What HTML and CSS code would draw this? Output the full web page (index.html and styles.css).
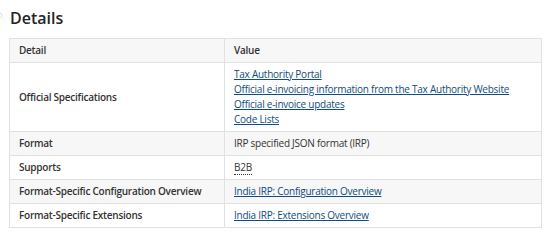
FILE: index.html
```html
<!DOCTYPE html>
<html lang="en">
<head>
    <meta charset="UTF-8">
    <title>Details</title>
    <link rel="stylesheet" href="styles.css">
</head>
<body>
    <div class="secao">
        <h2 class="titulo">
            <svg class="ancora" viewBox="0 0 16 16" xmlns="http://www.w3.org/2000/svg">
                <path d="M6.5 9.5l3-3M7 4.5l1.5-1.5a2.5 2.5 0 0 1 3.5 3.5L10.5 8M9 11.5l-1.5 1.5a2.5 2.5 0 0 1-3.5-3.5L5.5 8" fill="none" stroke="#e6e6e6" stroke-width="1.4"/>
            </svg>
            Details
        </h2>

        <table class="tabela">
            <thead>
                <tr>
                    <th>Detail</th>
                    <th>Value</th>
                </tr>
            </thead>
            <tbody>
                <tr>
                    <td class="rotulo">Official Specifications</td>
                    <td>
                        <a href="#">Tax Authority Portal</a><br>
                        <a href="#">Official e-invoicing information from the Tax Authority Website</a><br>
                        <a href="#">Official e-invoice updates</a><br>
                        <a href="#">Code Lists</a>
                    </td>
                </tr>
                <tr>
                    <td class="rotulo">Format</td>
                    <td>IRP specified JSON format (IRP)</td>
                </tr>
                <tr>
                    <td class="rotulo">Supports</td>
                    <td><abbr class="sigla">B2B</abbr></td>
                </tr>
                <tr>
                    <td class="rotulo">Format-Specific Configuration Overview</td>
                    <td><a href="#">India IRP: Configuration Overview</a></td>
                </tr>
                <tr>
                    <td class="rotulo">Format-Specific Extensions</td>
                    <td><a href="#">India IRP: Extensions Overview</a></td>
                </tr>
            </tbody>
        </table>
    </div>
</body>
</html>
```

FILE: styles.css
```css
body {
    margin: 0;
    padding: 0;
    background-color: #ffffff;
    font-family: 'Open Sans', 'Noto Sans', sans-serif;
    color: #333333;
}

.secao {
    padding: 6px 14px 0 9px;
}

.titulo {
    position: relative;
    margin: 0 0 8px 1px;
    font-size: 16px;
    font-weight: 600;
    line-height: 24px;
    color: #242424;
}

.ancora {
    position: absolute;
    left: -19px;
    top: 5px;
    width: 14px;
    height: 14px;
}

.tabela {
    width: 533px;
    border-collapse: collapse;
    font-size: 10px;
    letter-spacing: -0.25px;
    line-height: 15px;
}

.tabela th,
.tabela td {
    border: 1px solid #e1e1e1;
    padding: 4px 9px;
    text-align: left;
    vertical-align: middle;
}

.tabela th {
    background-color: #f7f7f7;
    font-weight: 600;
    color: #333333;
}

.tabela th:first-child,
.tabela td:first-child {
    width: 196px;
}

.tabela tbody tr:nth-child(even) {
    background-color: #f7f7f7;
}

.rotulo {
    font-weight: 600;
}

.tabela a {
    color: #0f4c81;
    text-decoration: underline;
}

.sigla {
    text-decoration: none;
    border-bottom: 1px dotted #333333;
}
```
